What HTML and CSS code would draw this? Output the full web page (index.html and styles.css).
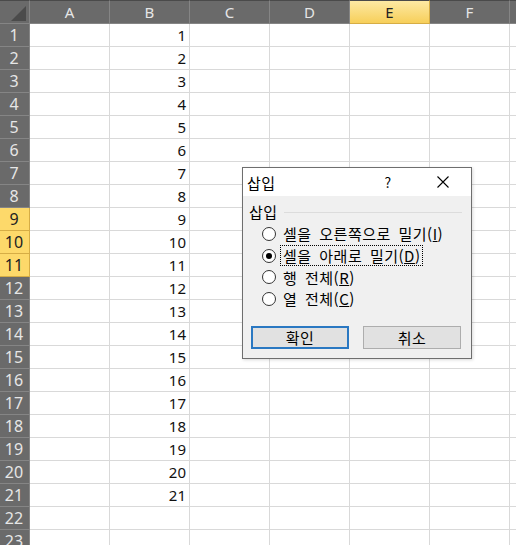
FILE: index.html
```html
<!DOCTYPE html>
<html lang="ko">
<head>
  <meta charset="UTF-8" />
  <title>삽입</title>
  <link rel="stylesheet" href="styles.css">
</head>
<body>
  <div class="page">
    <div class="sheet">
      <div class="h corner"><svg width="15" height="15" viewBox="0 0 15 15"><polygon points="15,0 15,15 0,15" fill="#4b4b4b"/></svg></div>
      <div class="h">A</div><div class="h">B</div><div class="h">C</div><div class="h">D</div><div class="h sel">E</div><div class="h">F</div><div class="h"></div>

      <div class="r">1</div><div class="c"></div><div class="c n">1</div><div class="c"></div><div class="c"></div><div class="c"></div><div class="c"></div><div class="c"></div>
      <div class="r">2</div><div class="c"></div><div class="c n">2</div><div class="c"></div><div class="c"></div><div class="c"></div><div class="c"></div><div class="c"></div>
      <div class="r">3</div><div class="c"></div><div class="c n">3</div><div class="c"></div><div class="c"></div><div class="c"></div><div class="c"></div><div class="c"></div>
      <div class="r">4</div><div class="c"></div><div class="c n">4</div><div class="c"></div><div class="c"></div><div class="c"></div><div class="c"></div><div class="c"></div>
      <div class="r">5</div><div class="c"></div><div class="c n">5</div><div class="c"></div><div class="c"></div><div class="c"></div><div class="c"></div><div class="c"></div>
      <div class="r">6</div><div class="c"></div><div class="c n">6</div><div class="c"></div><div class="c"></div><div class="c"></div><div class="c"></div><div class="c"></div>
      <div class="r">7</div><div class="c"></div><div class="c n">7</div><div class="c"></div><div class="c"></div><div class="c"></div><div class="c"></div><div class="c"></div>
      <div class="r">8</div><div class="c"></div><div class="c n">8</div><div class="c"></div><div class="c"></div><div class="c"></div><div class="c"></div><div class="c"></div>
      <div class="r sel">9</div><div class="c"></div><div class="c n">9</div><div class="c"></div><div class="c"></div><div class="c"></div><div class="c"></div><div class="c"></div>
      <div class="r sel">10</div><div class="c"></div><div class="c n">10</div><div class="c"></div><div class="c"></div><div class="c"></div><div class="c"></div><div class="c"></div>
      <div class="r sel">11</div><div class="c"></div><div class="c n">11</div><div class="c"></div><div class="c"></div><div class="c"></div><div class="c"></div><div class="c"></div>
      <div class="r">12</div><div class="c"></div><div class="c n">12</div><div class="c"></div><div class="c"></div><div class="c"></div><div class="c"></div><div class="c"></div>
      <div class="r">13</div><div class="c"></div><div class="c n">13</div><div class="c"></div><div class="c"></div><div class="c"></div><div class="c"></div><div class="c"></div>
      <div class="r">14</div><div class="c"></div><div class="c n">14</div><div class="c"></div><div class="c"></div><div class="c"></div><div class="c"></div><div class="c"></div>
      <div class="r">15</div><div class="c"></div><div class="c n">15</div><div class="c"></div><div class="c"></div><div class="c"></div><div class="c"></div><div class="c"></div>
      <div class="r">16</div><div class="c"></div><div class="c n">16</div><div class="c"></div><div class="c"></div><div class="c"></div><div class="c"></div><div class="c"></div>
      <div class="r">17</div><div class="c"></div><div class="c n">17</div><div class="c"></div><div class="c"></div><div class="c"></div><div class="c"></div><div class="c"></div>
      <div class="r">18</div><div class="c"></div><div class="c n">18</div><div class="c"></div><div class="c"></div><div class="c"></div><div class="c"></div><div class="c"></div>
      <div class="r">19</div><div class="c"></div><div class="c n">19</div><div class="c"></div><div class="c"></div><div class="c"></div><div class="c"></div><div class="c"></div>
      <div class="r">20</div><div class="c"></div><div class="c n">20</div><div class="c"></div><div class="c"></div><div class="c"></div><div class="c"></div><div class="c"></div>
      <div class="r">21</div><div class="c"></div><div class="c n">21</div><div class="c"></div><div class="c"></div><div class="c"></div><div class="c"></div><div class="c"></div>
      <div class="r">22</div><div class="c"></div><div class="c"></div><div class="c"></div><div class="c"></div><div class="c"></div><div class="c"></div><div class="c"></div>
      <div class="r">23</div><div class="c"></div><div class="c"></div><div class="c"></div><div class="c"></div><div class="c"></div><div class="c"></div><div class="c"></div>
    </div>

    <div class="dialog">
      <div class="titlebar">
        <span class="title">삽입</span>
        <span class="help">?</span>
        <span class="close"><svg width="12" height="12" viewBox="0 0 12 12"><path d="M0.5 0.5 L11.5 11.5 M11.5 0.5 L0.5 11.5" stroke="#000" stroke-width="1.1" fill="none"/></svg></span>
      </div>
      <div class="dlg-body">
        <div class="group-head"><span>삽입</span><span class="rule"></span></div>
        <div class="options">
          <div class="opt"><span class="radio"></span><span class="lbl">셀을 오른쪽으로 밀기(<u>I</u>)</span></div>
          <div class="opt"><span class="radio on"></span><span class="lbl focus">셀을 아래로 밀기(<u>D</u>)</span></div>
          <div class="opt"><span class="radio"></span><span class="lbl">행 전체(<u>R</u>)</span></div>
          <div class="opt"><span class="radio"></span><span class="lbl">열 전체(<u>C</u>)</span></div>
        </div>
        <div class="buttons">
          <div class="btn default">확인</div>
          <div class="btn">취소</div>
        </div>
      </div>
    </div>
  </div>
</body>
</html>
```

FILE: styles.css
```css
* {
  margin: 0;
  box-sizing: border-box;
}

body {
  font-family: 'Noto Sans', 'Noto Sans CJK KR', sans-serif;
  background: #fff;
  overflow: hidden;
}

.page {
  position: relative;
  width: 516px;
  height: 545px;
  overflow: hidden;
}

.sheet {
  display: grid;
  grid-template-columns: 30px repeat(7, 80px);
  grid-template-rows: 24px;
  grid-auto-rows: 23px;
  width: max-content;
  font-size: 15px;
  color: #111;
}

.c {
  border-right: 1px solid #d9d9d9;
  border-bottom: 1px solid #d9d9d9;
}

.n {
  text-align: right;
  padding-right: 3px;
  line-height: 22px;
}

.h, .r {
  background: #6a6a6a;
  color: #e6e6e6;
  border-right: 1px solid #858585;
  border-bottom: 1px solid #858585;
  display: flex;
  align-items: center;
  justify-content: center;
}

.h {
  border-top: 1px solid #4a4a4a;
}

.r {
  padding-right: 1px;
  font-size: 16px;
}

.corner {
  justify-content: flex-end;
  align-items: flex-end;
  padding: 0 3px 2px 0;
}

.h.sel {
  background: linear-gradient(#fde9a3, #f7cf5a);
  color: #222;
  border-right-color: #d6ad45;
  border-bottom-color: #d6ad45;
}

.r.sel {
  background: #fdd96a;
  color: #222;
  border-right-color: #d6ad45;
  border-bottom-color: #d6ad45;
}

.dialog {
  position: absolute;
  left: 242px;
  top: 167px;
  width: 230px;
  height: 192px;
  border: 1px solid #6e6e6e;
  background: #f0f0f0;
  box-shadow: 1px 1px 3px rgba(0, 0, 0, 0.15);
  font-family: 'Noto Sans CJK KR', sans-serif;
  font-size: 15px;
  letter-spacing: 0.5px;
  color: #000;
}

.titlebar {
  display: flex;
  align-items: center;
  height: 28px;
  background: #fff;
  padding-left: 4px;
}

.title {
  flex: 1;
}

.help {
  width: 20px;
  text-align: center;
  font-size: 14px;
}

.close {
  width: 44px;
  margin-left: 23px;
  margin-right: 6px;
  display: flex;
  justify-content: center;
}

.dlg-body {
  padding: 6px 9px 0 6px;
}

.group-head {
  display: flex;
  align-items: center;
  height: 18px;
  gap: 6px;
}

.rule {
  flex: 1;
  border-top: 1px solid #dcdcdc;
  margin-top: 2px;
}

.options {
  margin-top: 3px;
  padding-left: 13px;
}

.opt {
  display: flex;
  align-items: center;
  height: 21.7px;
}

.radio {
  width: 14px;
  height: 14px;
  border: 1px solid #333;
  border-radius: 50%;
  background: #fff;
  display: flex;
  align-items: center;
  justify-content: center;
}

.radio.on::after {
  content: "";
  width: 6px;
  height: 6px;
  border-radius: 50%;
  background: #000;
}

.lbl {
  margin-left: 5px;
  padding: 0 2px;
  word-spacing: 3px;
  line-height: 19px;
}

.lbl.focus {
  outline: 1px dotted #000;
}

.buttons {
  display: flex;
  gap: 14px;
  margin-top: 16px;
  padding-left: 2px;
}

.btn {
  width: 98px;
  height: 23px;
  background: #e1e1e1;
  border: 1px solid #adadad;
  display: flex;
  align-items: center;
  justify-content: center;
}

.btn.default {
  border: 2px solid #2a78c2;
}
```
